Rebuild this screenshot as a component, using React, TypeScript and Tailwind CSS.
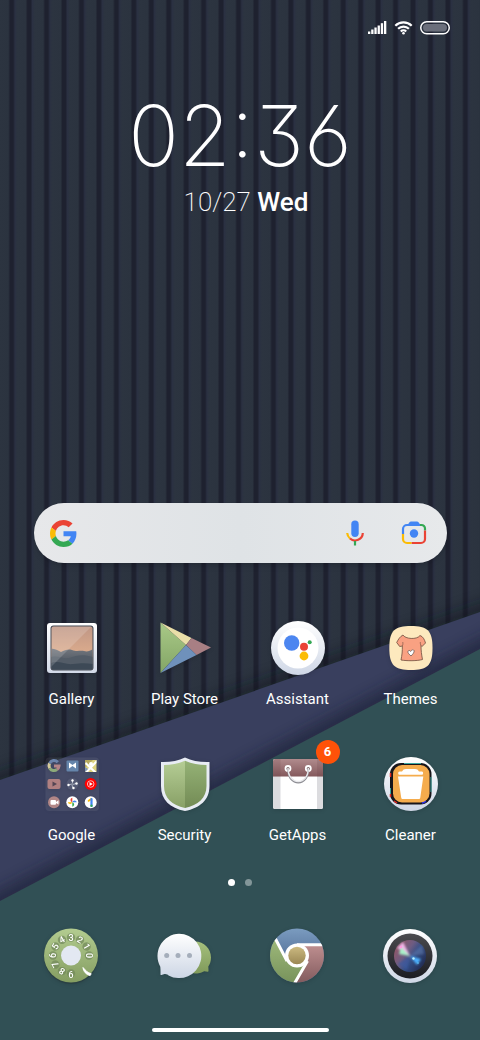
import type { ReactNode } from 'react';

function Wallpaper() {
  return (
    <svg
      className="absolute inset-0 h-full w-full"
      viewBox="0 0 480 1040"
      preserveAspectRatio="none"
      aria-hidden="true"
    >
      <defs>
        <linearGradient id="slat" x1="0" x2="1">
          <stop offset="0" stopColor="#2c3440" />
          <stop offset="0.49" stopColor="#2b333f" />
          <stop offset="0.56" stopColor="#1e212f" />
          <stop offset="0.77" stopColor="#1e212f" />
          <stop offset="0.84" stopColor="#2a3042" />
          <stop offset="1" stopColor="#2c3440" />
        </linearGradient>
        <pattern id="slats" width="17.45" height="1040" patternUnits="userSpaceOnUse">
          <rect width="17.5" height="1040" fill="url(#slat)" />
        </pattern>
        <filter id="soft" x="-20%" y="-20%" width="140%" height="140%">
          <feGaussianBlur stdDeviation="7" />
        </filter>
        <clipPath id="bandClip">
          <path d="M0 780 480 612V1040H0Z" />
        </clipPath>
      </defs>
      <rect width="480" height="1040" fill="url(#slats)" />
      <path d="M-20 787 500 605" stroke="#10121c" strokeWidth="16" opacity="0.5" filter="url(#soft)" />
      <path d="M0 780 480 612V1040H0Z" fill="#393f5e" />
      <g clipPath="url(#bandClip)">
        <path d="M-20 911 500 638" stroke="#1c2138" strokeWidth="18" opacity="0.65" filter="url(#soft)" />
      </g>
      <path d="M0 901 480 649V1040H0Z" fill="#315055" />
    </svg>
  );
}

function Icon({ children }: { children: ReactNode }) {
  return (
    <svg className="h-[54px] w-[54px] overflow-visible drop-shadow-sm" viewBox="0 0 54 54" aria-hidden="true">
      {children}
    </svg>
  );
}

function GalleryIcon() {
  return (
    <Icon>
      <defs>
        <linearGradient id="frame" x1="0" y1="0" x2="0" y2="1">
          <stop stopColor="#fff" />
          <stop offset="1" stopColor="#d3dae8" />
        </linearGradient>
        <linearGradient id="sunset" x1="0" y1="0" x2="0" y2="1">
          <stop stopColor="#bf9685" />
          <stop offset="0.55" stopColor="#d8a98c" />
          <stop offset="1" stopColor="#8b8688" />
        </linearGradient>
        <linearGradient id="hills" x1="0" y1="0" x2="0" y2="1">
          <stop stopColor="#72767d" />
          <stop offset="1" stopColor="#3e4956" />
        </linearGradient>
        <clipPath id="photo">
          <rect x="6.5" y="5.5" width="41" height="43" rx="2" />
        </clipPath>
      </defs>
      <rect x="2" y="2" width="50" height="50" rx="3" fill="url(#frame)" />
      <rect x="5.5" y="4.5" width="43" height="45" rx="3" fill="#454b55" />
      <g clipPath="url(#photo)">
        <rect x="6" y="5" width="42" height="44" fill="url(#sunset)" />
        <path d="M6 28c4-1 7 2 10 3 4-2 7-3 11-2 5 2 9 0 12 1s6 0 9-2v21H6Z" fill="url(#hills)" />
        <path d="M6 36c6-2 12 2 18 1 8-3 14-4 24-1v13H6Z" fill="#535c67" />
        <path d="M6 42c8-3 14 2 22 1s14-1 20 0v6H6Z" fill="#3d4956" />
        <path d="M6 5h41L6 46Z" fill="#fff" opacity="0.16" />
      </g>
    </Icon>
  );
}

function PlayIcon() {
  return (
    <Icon>
      <defs>
        <linearGradient id="playGreen" x1="0" y1="0" x2="0" y2="1">
          <stop stopColor="#a9c987" />
          <stop offset="1" stopColor="#83a566" />
        </linearGradient>
      </defs>
      <path d="M2.500 1.500 28 24 2.500 52Z" fill="url(#playGreen)" />
      <path d="M2.500 1.500 33.500 17 28 24Z" fill="#eadfa8" />
      <path d="M33.500 17 53 26.500 38.500 34 28 24Z" fill="#a87f84" />
      <path d="M2.500 52 28 24 38.500 34Z" fill="#6f91bb" />
    </Icon>
  );
}

function Disc() {
  return (
    <>
      <defs>
        <linearGradient id="disc" x1="0" y1="0" x2="0" y2="1">
          <stop stopColor="#fff" />
          <stop offset="1" stopColor="#cfd7e6" />
        </linearGradient>
      </defs>
      <circle cx="27" cy="27" r="27" fill="url(#disc)" />
    </>
  );
}

function AssistantIcon() {
  return (
    <Icon>
      <Disc />
      <circle cx="27" cy="27" r="20.5" fill="#fff" />
      <circle cx="20.7" cy="22" r="7.7" fill="#4c86f0" />
      <circle cx="33" cy="25.7" r="4" fill="#ea4335" />
      <circle cx="38.7" cy="21.3" r="2" fill="#34a853" />
      <circle cx="33" cy="35" r="4.4" fill="#fbbc05" />
    </Icon>
  );
}

function ThemesIcon() {
  return (
    <Icon>
      <path d="M27 5C43 5 48.500 9 48.500 27S43 49 27 49 5.300 45 5.300 27 11 5 27 5Z" fill="#fde9be" />
      <path
        d="M19 14c2 4 14 5 17 .5 3 1 4.500 4 5.500 7.500l-3.500 3.500-1-1c0 5 .5 9 1.500 14-5 1.500-16 1.500-21.500.5 1-5 1.500-9 1.300-14l-2.600.5-3-4c1.500-3 3.300-6 6.300-7.500Z"
        fill="#f9a182"
        stroke="#6e4c3e"
        strokeWidth="0.8"
        strokeLinejoin="round"
      />
      <path d="M18.300 25c.7-1 .7-2.500.5-4M37 24.500c-.7-1-.8-2-.7-3.500" stroke="#6e4c3e" strokeWidth="0.6" fill="none" />
      <path d="M27 35c-1.500-1.500-3.500-3-3-4.500s2-1.200 2.600 0c.6-1.700 3-2.300 3.500-.8.400 1.700-1.600 3.800-3.100 5.300Z" fill="#fff" stroke="#5b4a45" strokeWidth="0.7" />
    </Icon>
  );
}

function GoogleFolderIcon() {
  return (
    <Icon>
      <rect x="0.5" y="0.5" width="53.5" height="53.5" rx="4" fill="#fff" opacity="0.07" />
      <g fill="none" strokeWidth="3">
        <path d="M12.800 5.200A5 5 0 0 0 4.500 6.500" stroke="#6c83ab" />
        <path d="M4.500 6.500a5 5 0 0 0 .3 4.800" stroke="#d6cc9a" />
        <path d="M4.800 11.300a5 5 0 0 0 7.200 1.200" stroke="#8dab7a" />
        <path d="M12 12.500A5 5 0 0 0 14 9H9" stroke="#b58588" />
      </g>
      <rect x="21.5" y="3.5" width="12" height="11" rx="1" fill="#6585ab" />
      <path d="M24 5.500 27.500 8l3.500-2.500v6L27.500 9 24 11.500Z" fill="#fff" />
      <path d="M40 3h11.500v12H40Z" fill="#ddd27f" />
      <path d="M40 3h8l-8 8Z" fill="#b6a95f" />
      <path d="m40 15 11.500-12v3L43 15ZM41 5l10.500 10h-3L40 7Z" fill="#fff" />
      <path d="M40 15v-5l3 2Z" fill="#8096b6" />
      <circle cx="46" cy="7" r="2" fill="#fff" />
      <rect x="2.500" y="22" width="13" height="10" rx="2" fill="#b08081" />
      <path d="m7.500 24.500 4.500 2.500-4.500 2.500Z" fill="#544553" />
      <circle cx="27.5" cy="27" r="6" fill="#535973" />
      <path d="M27.500 22.500v4M27.500 27.500l4-1M27 28l1 3.500M27 27l-4 1" stroke="#d5dbe4" strokeWidth="0.7" />
      <g fill="#fff">
        <circle cx="27.5" cy="23.5" r="1.2" />
        <circle cx="31.5" cy="26.5" r="1.2" />
        <circle cx="28.5" cy="31" r="1.2" />
        <circle cx="23.5" cy="28" r="1.2" />
      </g>
      <circle cx="45.7" cy="27" r="6" fill="#f00" />
      <circle cx="45.7" cy="27" r="3.3" fill="none" stroke="#fff" strokeWidth="0.7" />
      <path d="m44.500 25 3.300 2-3.300 2Z" fill="#fff" />
      <circle cx="9" cy="45.3" r="6" fill="#b18686" />
      <rect x="5.500" y="43" width="5.5" height="4.8" rx="1" fill="#fff" />
      <path d="m11 45 2.500-1.800v4.400L11 46Z" fill="#fff" />
      <circle cx="27.3" cy="45.3" r="6" fill="#fff" />
      <path d="M27.300 45.300v-4.500a2.300 2.300 0 0 0 0 4.500Z" fill="#ea4335" />
      <path d="M27.300 45.300h4.500a2.300 2.300 0 0 0-4.500 0Z" fill="#4285f4" />
      <path d="M27.300 45.300v4.500a2.300 2.300 0 0 0 0-4.500Z" fill="#34a853" />
      <path d="M27.300 45.300h-4.500a2.300 2.300 0 0 0 4.500 0Z" fill="#fbbc05" />
      <circle cx="45.7" cy="45.3" r="6" fill="#fff" />
      <path d="m43.700 43.800 2.500-1.800" stroke="#fbbc05" strokeWidth="2" strokeLinecap="round" />
      <path d="M46.500 42v7" stroke="#4285f4" strokeWidth="2.2" strokeLinecap="round" />
      <path d="M46.500 48.500v.500" stroke="#34a853" strokeWidth="2.200" strokeLinecap="round" />
    </Icon>
  );
}

function SecurityIcon() {
  return (
    <Icon>
      <defs>
        <linearGradient id="shieldL" x1="0" y1="0" x2="0" y2="1">
          <stop stopColor="#b5cd95" />
          <stop offset="1" stopColor="#88a066" />
        </linearGradient>
        <linearGradient id="shieldR" x1="0" y1="0" x2="0" y2="1">
          <stop stopColor="#95b276" />
          <stop offset="1" stopColor="#738b55" />
        </linearGradient>
      </defs>
      <path d="M27 .5c7 3.500 15 4.800 24.500 4.500v24C51.500 43 42 51 27 54 12 51 3 43 3 29V5C12 5.300 20 4 27 .5Z" fill="#e8ecf4" />
      <path d="M27 3.800C20 7 13 8 6 8v21c0 12 8 19 21 22Z" fill="url(#shieldL)" />
      <path d="M27 3.800C34 7 41 8 48.500 8v21c0 12-8.500 19-21.500 22Z" fill="url(#shieldR)" />
    </Icon>
  );
}

function GetAppsIcon() {
  return (
    <Icon>
      <defs>
        <linearGradient id="bagTop" x1="0" y1="0" x2="0" y2="1">
          <stop stopColor="#b08b8d" />
          <stop offset="1" stopColor="#84595c" />
        </linearGradient>
      </defs>
      <rect x="2" y="2" width="50" height="50" rx="2" fill="#fff" />
      <path d="M2 19h7.500v33H4a2 2 0 0 1-2-2ZM46 19h6v31a2 2 0 0 1-2 2h-4Z" fill="#dcdcdf" />
      <path d="M4 2h46a2 2 0 0 1 2 2v15.500H2V4a2 2 0 0 1 2-2Z" fill="url(#bagTop)" />
      <path d="M2 4a2 2 0 0 1 2-2h5.500v17.500H2ZM46 2h4a2 2 0 0 1 2 2v15.500h-6Z" fill="#5b383b" opacity="0.15" />
      <g fill="#7b6669" stroke="#fff" strokeWidth="1.8">
        <circle cx="17" cy="11.5" r="2.5" />
        <circle cx="37.3" cy="11.5" r="2.5" />
      </g>
      <path d="M17 12c0 9 5 13.500 10.300 13.500S37.300 21 37.300 12" fill="none" stroke="#8d8d93" strokeWidth="1.8" />
      <path d="M17 11c0 9 5 13.500 10.300 13.500S37.300 20 37.300 11" fill="none" stroke="#e9e9ec" strokeWidth="1.4" />
    </Icon>
  );
}

function CleanerIcon() {
  return (
    <Icon>
      <Disc />
      <rect x="6" y="6" width="41.5" height="41.5" rx="11" fill="#17151a" />
      <path d="M6.500 20v-4M6.500 40v-3M10 44l3 2" stroke="#e02b24" strokeWidth="1.5" />
      <path d="M6.500 31v6M20 6.500h17M47 20v15" stroke="#3ba7a0" strokeWidth="1" />
      <path d="m38 46 4-2" stroke="#292fe0" strokeWidth="2" />
      <rect x="9" y="8" width="36.5" height="37.5" rx="9" fill="#f5ac4d" />
      <path d="M18 14.500c1-1.700 2-2.500 4-2.500h9c2 0 3 .8 4 2.500h3c1.500 0 1.500 3.300 0 3.300H15.500c-1.700 0-1.700-3.300 0-3.300ZM14 19.500h25.300l-3 21c-.1 1-.8 1.500-1.800 1.500H19c-1 0-1.700-.5-1.800-1.500Z" fill="#fff" />
    </Icon>
  );
}

// finger holes, clockwise from the top
const dial = ['3', '2', '1', '0', '', '', '9', '8', '7', '6', '5', '4'];

function PhoneIcon() {
  return (
    <Icon>
      <defs>
        <linearGradient id="phone" x1="0" y1="0" x2="0" y2="1">
          <stop stopColor="#b3cc90" />
          <stop offset="1" stopColor="#849d61" />
        </linearGradient>
      </defs>
      <circle cx="27" cy="28" r="27" fill="#27383a" opacity="0.5" />
      <circle cx="27" cy="26.5" r="27" fill="url(#phone)" />
      {dial.map((digit, i) =>
        digit ? (
          <g key={digit} transform={`rotate(${i * 30} 27 26.5)`}>
            <circle cx="27" cy="8.5" r="4.2" fill="#71885a" opacity="0.7" />
            <text x="27" y="11.5" textAnchor="middle" fontFamily="Roboto, sans-serif" fontSize="9" fontWeight="500" fill="#fff">
              {digit}
            </text>
          </g>
        ) : null,
      )}
      <circle cx="27" cy="26.5" r="10" fill="#e3e8f2" />
      <path d="M39 38.500c.3 4 3.300 7.300 7.200 8l1-1.800c-3.500-.8-5.700-3.200-8.200-6.200Z" fill="#fff" stroke="#fff" strokeLinejoin="round" />
    </Icon>
  );
}

function MessagesIcon() {
  return (
    <Icon>
      <defs>
        <linearGradient id="bubble" x1="0" y1="0" x2="0" y2="1">
          <stop stopColor="#fff" />
          <stop offset="1" stopColor="#cdd6e5" />
        </linearGradient>
        <linearGradient id="reply" x1="0" y1="0" x2="0" y2="1">
          <stop stopColor="#a5c07d" />
          <stop offset="1" stopColor="#809a5b" />
        </linearGradient>
      </defs>
      <path d="M38 12.500c9 0 16 7 16 16 0 3.500-1 6.500-2.700 9 .1 1.800.2 3 .2 4.500q0 .8-.8.700l-3.500-.5a16 16 0 1 1-9.200-29.700Z" fill="url(#reply)" />
      <path d="M22 4.700a22.200 22.200 0 1 1-10.500 41.700c0-.5-3-1.800-4-1.300l-3 .9q-1 .3-1-.8c.1-3 0-5-.2-7.500A22.200 22.200 0 0 1 22 4.700Z" fill="url(#bubble)" />
      <g fill="#a5aebb">
        <circle cx="9.7" cy="26.5" r="2.5" />
        <circle cx="21" cy="26.5" r="2.5" />
        <circle cx="32.5" cy="26.5" r="2.5" />
      </g>
    </Icon>
  );
}

function ChromeIcon() {
  return (
    <Icon>
      <defs>
        <linearGradient id="chromeBlue" x1="0" y1="0" x2="0" y2="0.6">
          <stop stopColor="#7b9cc0" />
          <stop offset="1" stopColor="#536f98" />
        </linearGradient>
        <linearGradient id="chromeRed" x1="0" y1="0" x2="0" y2="1">
          <stop stopColor="#c09091" />
          <stop offset="1" stopColor="#80595c" />
        </linearGradient>
        <linearGradient id="chromeGreen" x1="0" y1="0" x2="0" y2="1">
          <stop stopColor="#a6c181" />
          <stop offset="1" stopColor="#76915a" />
        </linearGradient>
        <linearGradient id="chromeGold" x1="0" y1="0" x2="0" y2="1">
          <stop stopColor="#cbb980" />
          <stop offset="1" stopColor="#9b8855" />
        </linearGradient>
        <clipPath id="chromeClip">
          <circle cx="27" cy="26.5" r="27" />
        </clipPath>
      </defs>
      <g clipPath="url(#chromeClip)">
        <rect y="-1" width="54" height="55" fill="url(#chromeBlue)" />
        <path d="M27 15h28v40H23l13.500-23Z" fill="url(#chromeRed)" />
        <path d="M-1 0 4.500 8.500 17 32l12 6 6-2-12 20H-1Z" fill="url(#chromeGreen)" />
        <path d="M27 15.800h28M4.500 8 17 32M37.500 32 23 57" stroke="#fff" strokeWidth="3" />
        <circle cx="27" cy="26.5" r="12" fill="#fff" />
        <circle cx="27" cy="26.5" r="8.7" fill="url(#chromeGold)" />
      </g>
    </Icon>
  );
}

function CameraIcon() {
  return (
    <Icon>
      <Disc />
      <defs>
        <linearGradient id="lensRing" x1="0" y1="0" x2="0" y2="1">
          <stop stopColor="#4b4b4f" />
          <stop offset="1" stopColor="#1b1c22" />
        </linearGradient>
        <linearGradient id="lens" x1="0" y1="0" x2="1" y2="0.7">
          <stop stopColor="#a1545b" />
          <stop offset="0.45" stopColor="#6d5c82" />
          <stop offset="0.65" stopColor="#354f86" />
          <stop offset="1" stopColor="#222c52" />
        </linearGradient>
        <filter id="glow" x="-50%" y="-50%" width="200%" height="200%">
          <feGaussianBlur stdDeviation="1" />
        </filter>
      </defs>
      <circle cx="27" cy="27" r="22.5" fill="url(#lensRing)" />
      <circle cx="27" cy="27" r="16" fill="url(#lens)" />
      <g filter="url(#glow)">
        <path d="M27 27 14 19l6-6Z" fill="#f0b6e8" />
        <path d="M27 27 16 25l2-7Z" fill="#a8f0c8" />
        <path d="M27 27l11 3-4 6Z" fill="#4bb0ff" />
        <path d="M27 27 39 16l2 9Z" fill="#5d77a8" opacity="0.6" />
        <path d="M27 27 15 35l9 6Z" fill="#3a59a0" opacity="0.7" />
      </g>
      <circle cx="18" cy="18" r="1.2" fill="#ff9ae0" />
      <circle cx="30.5" cy="29.5" r="1.2" fill="#b9f0ff" />
      <circle cx="35" cy="34" r="0.8" fill="#63ccff" />
    </Icon>
  );
}

const apps = [
  { label: 'Gallery', icon: GalleryIcon },
  { label: 'Play Store', icon: PlayIcon },
  { label: 'Assistant', icon: AssistantIcon },
  { label: 'Themes', icon: ThemesIcon },
  { label: 'Google', icon: GoogleFolderIcon },
  { label: 'Security', icon: SecurityIcon },
  { label: 'GetApps', icon: GetAppsIcon, badge: 6 },
  { label: 'Cleaner', icon: CleanerIcon },
];

const dock = [
  { label: 'Phone', icon: PhoneIcon },
  { label: 'Messages', icon: MessagesIcon },
  { label: 'Chrome', icon: ChromeIcon },
  { label: 'Camera', icon: CameraIcon },
];

function StatusBar() {
  return (
    <header className="flex items-center justify-end gap-[7px] px-[30px] pt-5">
      <svg className="h-4 w-[19px]" viewBox="0 0 19 16" fill="#fff" aria-label="Signal" role="img">
        <rect x="0" y="11.5" width="2.3" height="2.5" />
        <rect x="3.2" y="9.5" width="2.3" height="4.5" />
        <rect x="6.4" y="7.5" width="2.3" height="6.500" />
        <rect x="9.6" y="5.5" width="2.3" height="8.500" />
        <rect x="12.8" y="3.2" width="2.3" height="10.800" />
        <rect x="16" y="1" width="2.3" height="13" />
      </svg>
      <svg className="h-4 w-[19px]" viewBox="0 0 18 16" fill="none" stroke="#fff" strokeWidth="2.2" aria-label="Wi-Fi" role="img">
        <path d="M.8 5.800a11.600 11.600 0 0 1 16.400 0M3.600 8.800a7.600 7.600 0 0 1 10.800 0M6.300 11.500a3.900 3.900 0 0 1 5.400 0" />
        <circle cx="9" cy="13.3" r="1.3" fill="#fff" stroke="none" />
      </svg>
      <svg className="h-4 w-[30px]" viewBox="0 0 30 16" aria-label="Battery" role="img">
        <rect x="0.75" y="1.75" width="28.5" height="12" rx="6" fill="none" stroke="#fff" strokeWidth="1.5" />
        <rect x="3" y="4" width="24" height="7.5" rx="3.7" fill="#6b6f7b" />
      </svg>
    </header>
  );
}

function SearchBar() {
  return (
    <form
      role="search"
      className="mr-[33px] ml-[34px] flex h-[60px] items-center rounded-full bg-linear-to-r from-[#e7e8ea] via-[#dfe3e6] to-[#e7e9eb] pr-5 pl-4 shadow-md"
      onSubmit={(e) => e.preventDefault()}
    >
      <svg className="h-[27px] w-[27px] shrink-0" viewBox="0 0 48 48" aria-hidden="true">
        <path fill="#ea4335" d="M24 9.500c3.540 0 6.710 1.220 9.210 3.600l6.850-6.850C35.900 2.380 30.470 0 24 0 14.620 0 6.510 5.380 2.560 13.220l7.980 6.190C12.430 13.720 17.740 9.500 24 9.500z" />
        <path fill="#4285f4" d="M46.980 24.550c0-1.570-.15-3.090-.38-4.550H24v9.020h12.940c-.58 2.960-2.260 5.480-4.780 7.180l7.730 6c4.510-4.180 7.090-10.360 7.090-17.650z" />
        <path fill="#fbbc05" d="M10.530 28.590c-.48-1.450-.76-2.990-.76-4.590s.27-3.140.76-4.590l-7.980-6.190C.92 16.460 0 20.120 0 24c0 3.880.92 7.540 2.560 10.780l7.970-6.190z" />
        <path fill="#34a853" d="M24 48c6.480 0 11.930-2.130 15.890-5.810l-7.730-6c-2.150 1.450-4.920 2.300-8.160 2.300-6.260 0-11.570-4.220-13.470-9.910l-7.980 6.190C6.510 42.620 14.620 48 24 48z" />
      </svg>
      <input type="search" aria-label="Search Google" className="h-full min-w-0 flex-1 bg-transparent px-3 text-lg text-gray-800 outline-none" />
      <button type="button" aria-label="Voice search" className="mr-[37px]">
        <svg className="h-[26px] w-[18px]" viewBox="0 0 18 26" fill="none" strokeWidth="2.2">
          <rect x="5.3" y="0.5" width="7.4" height="16.5" rx="3.7" fill="#4285f4" />
          <path d="M1.200 13a8 8 0 0 0 2.800 5.500" stroke="#fbbc05" />
          <path d="M4 18.500a7.700 7.700 0 0 0 12.800-5.500" stroke="#ea4335" />
          <path d="M9 21v4.500" stroke="#34a853" />
        </svg>
      </button>
      <button type="button" aria-label="Search with camera">
        <svg className="h-[24px] w-[26px]" viewBox="0 0 26 24" fill="none" strokeWidth="2.2">
          <path d="M6.500 4 8.500 1.300q.5-.8 1.500-.8h6q1 0 1.500.8L19.500 4v1H6.500Z" fill="#4285f4" />
          <path d="M2 13V8a4 4 0 0 1 4-4h13" stroke="#4285f4" />
          <path d="M19 4h1.500A3.500 3.500 0 0 1 24 7.500v2" stroke="#34a853" />
          <path d="M24 9.500V18a4 4 0 0 1-4 4h-9.500" stroke="#ea4335" />
          <path d="M2 13v5a4 4 0 0 0 4 4h4.500" stroke="#fbbc05" />
          <circle cx="13" cy="12.5" r="4.2" fill="#4285f4" />
        </svg>
      </button>
    </form>
  );
}

export default function App() {
  return (
    <main className="relative min-h-screen overflow-hidden bg-[#2b333f] font-['Roboto',sans-serif] text-white">
      <Wallpaper />
      <div className="relative flex min-h-screen flex-col">
        <StatusBar />

        <section className="mt-12 flex flex-col items-center">
          <time className="font-['Inter',sans-serif] text-[84px] leading-[104px] font-extralight [font-feature-settings:'cv09','cv03','case']">
            02:36
          </time>
          <p className="ml-3 text-[26px] leading-7">
            <span className="font-extralight">10/27</span> <span className="font-medium">Wed</span>
          </p>
        </section>

        <div className="flex-1" />

        <SearchBar />

        <nav aria-label="Apps" className="mt-[58px] grid grid-cols-4 gap-y-12 pr-[13px] pl-[15px]">
          {apps.map(({ label, icon: AppIcon, badge }) => (
            <button key={label} type="button" className="flex flex-col items-center gap-[14px]">
              <span className="relative">
                <AppIcon />
                {badge && (
                  <span className="absolute -top-[17px] left-[45px] flex h-6 w-6 items-center justify-center rounded-full bg-[#ff5208] text-[13px] font-bold">
                    {badge}
                  </span>
                )}
              </span>
              <span className="text-[15px] leading-5">{label}</span>
            </button>
          ))}
        </nav>

        <div className="mt-[34px] flex justify-center gap-[10px]">
          <span className="h-[7px] w-[7px] rounded-full bg-white" />
          <span className="h-[7px] w-[7px] rounded-full bg-white/40" />
        </div>

        <nav aria-label="Dock" className="mt-[43px] grid grid-cols-4 px-[14px]">
          {dock.map(({ label, icon: AppIcon }) => (
            <button key={label} type="button" aria-label={label} className="flex justify-center">
              <AppIcon />
            </button>
          ))}
        </nav>

        <div className="mx-auto mt-[45px] mb-2 h-1 w-[177px] rounded-full bg-white" />
      </div>
    </main>
  );
}
